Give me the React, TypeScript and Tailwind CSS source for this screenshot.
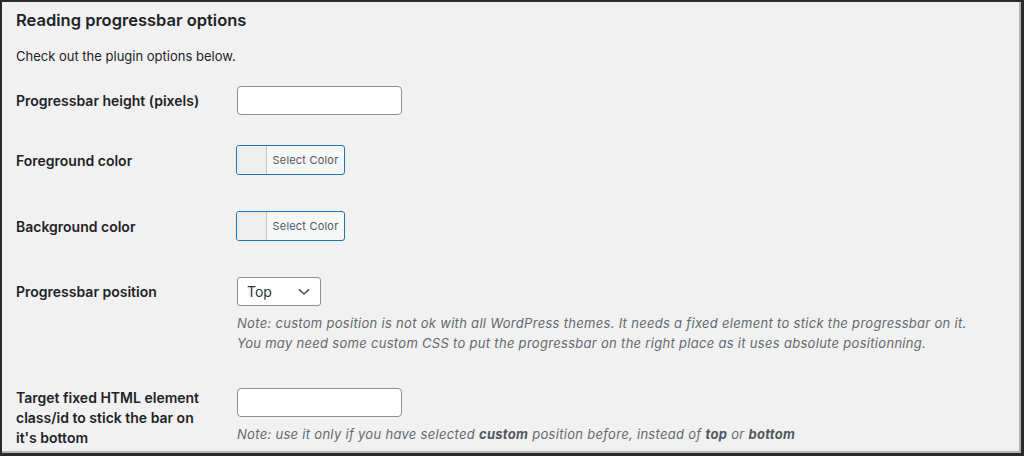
import React from 'react';

const font = { fontFamily: 'Inter, "Noto Sans", sans-serif' };

const ColorButton: React.FC = () => (
  <button
    type="button"
    className="flex h-[30px] w-[109px] items-stretch overflow-hidden rounded-[3px] border border-[#2271b1] bg-[#f6f7f7] p-0"
  >
    <span className="w-[30px] border-r border-[#c3c4c7] bg-[#eeeeee]" />
    <span className="flex flex-1 items-center justify-center text-[11px] tracking-[0.2px] text-[#50575e]">Select Color</span>
  </button>
);

export default function App() {
  return (
    <div style={font} className="h-[456px] w-[1024px] border-t-2 border-l-2 border-r-[3px] border-b-[3px] border-[#2a2a2a] bg-[#f1f1f1] text-[#1d2327]">
      <div className="h-full w-full border-r-2 border-b-2 border-[#b4b4b4] pl-[14px] pt-[8px]">
        <h2 className="text-[16.5px] font-semibold leading-[20px]">Reading progressbar options</h2>
        <p className="mt-[16px] text-[13px] leading-[20px]">Check out the plugin options below.</p>

        {/* Progressbar height */}
        <div className="mt-[20px] flex">
          <label className="mt-[6px] w-[221px] text-[14px] font-semibold leading-[18px]">Progressbar height (pixels)</label>
          <input type="text" className="h-[29px] w-[165px] rounded-[4px] border border-[#8c8f94] bg-white" />
        </div>

        {/* Foreground color */}
        <div className="mt-[30px] flex">
          <label className="mt-[7px] w-[220px] text-[14px] font-semibold leading-[18px]">Foreground color</label>
          <ColorButton />
        </div>

        {/* Background color */}
        <div className="mt-[36px] flex">
          <label className="mt-[7px] w-[220px] text-[14px] font-semibold leading-[18px]">Background color</label>
          <ColorButton />
        </div>

        {/* Position */}
        <div className="mt-[36px] flex">
          <label className="mt-[6px] w-[221px] text-[14px] font-semibold leading-[18px]">Progressbar position</label>
          <div>
            <div className="flex h-[29px] w-[84px] items-center justify-between rounded-[3px] border border-[#8c8f94] bg-white pl-[9px] pr-[10px] text-[14px] text-[#2c3338]">
              <span>Top</span>
              <svg width="12" height="8" viewBox="0 0 12 8" fill="none">
                <path d="M1.5 1.8 6 6 10.5 1.8" stroke="#50575e" strokeWidth="1.6" strokeLinecap="round" strokeLinejoin="round" />
              </svg>
            </div>
            <p className="mt-[7px] text-[13px] italic leading-[20px] tracking-[0.3px] text-[#646970]">
              Note: custom position is not ok with all WordPress themes. It needs a fixed element to stick the progressbar on it.
              <br />
              You may need some custom CSS to put the progressbar on the right place as it uses absolute positionning.
            </p>
          </div>
        </div>

        {/* Target element */}
        <div className="mt-[35px] flex">
          <label className="w-[221px] pr-[30px] text-[14px] font-semibold leading-[20px]">
            Target fixed HTML element class/id to stick the bar on it's bottom
          </label>
          <div>
            <input type="text" className="h-[29px] w-[165px] rounded-[4px] border border-[#8c8f94] bg-white" />
            <p className="mt-[7px] text-[13px] italic leading-[20px] tracking-[0.3px] text-[#646970]">
              Note: use it only if you have selected <b className="font-bold text-[#50575e]">custom</b> position before, instead of{' '}
              <b className="font-bold text-[#50575e]">top</b> or <b className="font-bold text-[#50575e]">bottom</b>
            </p>
          </div>
        </div>
      </div>
    </div>
  );
}
